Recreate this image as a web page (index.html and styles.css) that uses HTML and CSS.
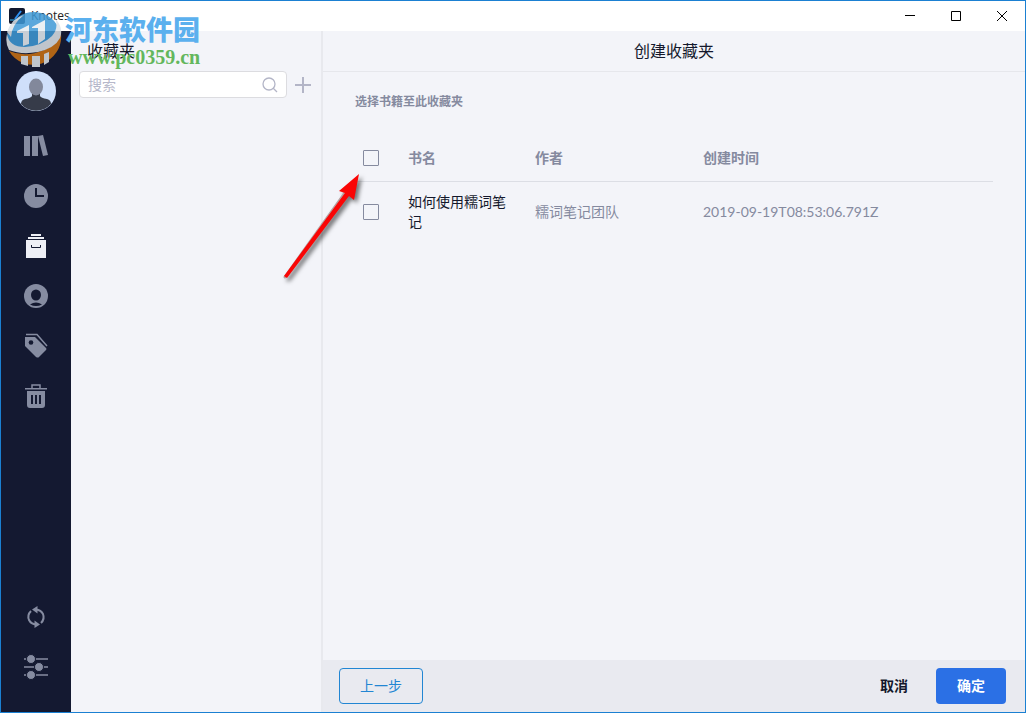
FILE: index.html
```html
<!DOCTYPE html>
<html lang="zh-CN">
<head>
<meta charset="utf-8">
<meta name="viewport" content="width=device-width, initial-scale=1">
<title>Knotes</title>
<link rel="stylesheet" href="styles.css">
</head>
<body>
<div class="window">
  <header class="titlebar">
    <svg class="app-icon" viewBox="0 0 16 16" aria-hidden="true"><rect width="16" height="16" rx="2" fill="#10182f"/><path d="M6 11 12 3" stroke="#2c8ff0" stroke-width="2"/><path d="M1 12h7l4-3" stroke="#35b7f5" fill="none"/></svg>
    <span class="app-name">Knotes</span>
    <div class="window-controls">
      <button class="window-button" aria-label="最小化"><svg viewBox="0 0 10 10"><path d="M0 4.500h10"/></svg></button>
      <button class="window-button" aria-label="最大化"><svg viewBox="0 0 10 10"><path d="M.5.5h9v9h-9z"/></svg></button>
      <button class="window-button" aria-label="关闭"><svg viewBox="0 0 10 10"><path d="m0 0 10 10M10 0 0 10"/></svg></button>
    </div>
  </header>

  <div class="workspace">
    <nav class="sidebar" aria-label="导航">
      <button class="avatar" aria-label="账户">
        <svg viewBox="0 0 40 40"><circle cx="20" cy="20" r="20" fill="#cfdffa"/><path d="M16 20h8v5q1 2 7 3 4 1 4 5a20 20 0 0 1-30 0q0-4 4-5 6-1 7-3z" fill="#363b49"/><ellipse cx="20" cy="16" rx="7" ry="8.500" fill="#82889b"/></svg>
      </button>
      <button class="nav-item" aria-label="书库"><svg viewBox="0 0 24 24"><path d="M0 2h6v20H0zM8 2h6v20H8zM14 2l5-1 5 20-5 1z"/></svg></button>
      <button class="nav-item" aria-label="最近"><svg viewBox="0 0 24 24"><circle cx="12" cy="12" r="12"/><path class="cut-line" d="M12 4v8h8"/></svg></button>
      <button class="nav-item nav-item-active" aria-label="收藏夹"><svg viewBox="0 0 24 24"><path d="M7 0h10v2H7zM4 3h16v2H4zM2 6h20v18H2z"/><path class="cut-line cut-thin" d="M7.500 11v2.500h9V11"/></svg></button>
      <button class="nav-item" aria-label="个人"><svg viewBox="0 0 24 24"><circle cx="12" cy="12" r="12"/><ellipse class="cut" cx="12" cy="11" rx="5" ry="5.500"/><path class="cut" d="M6 20.500q6-4 12 0-6 3-12 0"/></svg></button>
      <button class="nav-item" aria-label="标签"><svg viewBox="0 0 24 24"><path d="M1 3h10l11 11q1 1 0 2l-7 7q-1 1-3 0L1 12z"/><path d="M2 .5h11l10 11.500" fill="none" stroke="currentColor" stroke-width="1.500"/><circle class="cut" cx="7" cy="8.500" r="2.300"/></svg></button>
      <button class="nav-item" aria-label="回收站"><svg viewBox="0 0 24 24"><path d="M1 4h22v1.500H1zM3 7h18v14q0 3-3 3H6q-3 0-3-3z"/><path d="M8 4V1h8v3" fill="none" stroke="currentColor" stroke-width="1.500"/><path class="cut-line" d="M8 11v9M12 11v9M16 11v9"/></svg></button>
      <button class="nav-item nav-item-bottom" aria-label="同步"><svg viewBox="0 0 24 24"><g fill="none" stroke="currentColor" stroke-width="2"><path d="M7 6Q3 10 5 15 7 19 12 19.500M17 18Q21 14 19 9 17 5 12 4.500"/></g><path d="M13.500 1v7.500L8 4.500zM10.500 15.500V23l5.500-3.500z"/></svg></button>
      <button class="nav-item" aria-label="设置"><svg viewBox="0 0 24 24"><path d="M0 4h24M0 12h24M0 20h24" stroke="currentColor" stroke-width="1.500"/><g class="knobs"><circle cx="7" cy="4" r="4.500"/><circle cx="15" cy="12" r="4.500"/><circle cx="7" cy="20" r="4.500"/></g></svg></button>
    </nav>

    <aside class="folders">
      <h2 class="folders-title">收藏夹</h2>
      <div class="search-row">
        <label class="search">
          <input class="search-input" type="text" placeholder="搜索" aria-label="搜索">
          <svg class="search-icon" viewBox="0 0 16 16" aria-hidden="true"><circle cx="7" cy="7" r="6"/><path d="m11 11 4 4"/></svg>
        </label>
        <button class="add-button" aria-label="新建收藏夹"><svg viewBox="0 0 16 16"><path d="M8 0v16M0 8h16"/></svg></button>
      </div>
    </aside>

    <main class="content">
      <h1 class="content-title">创建收藏夹</h1>
      <section class="picker">
        <h3 class="picker-title">选择书籍至此收藏夹</h3>
        <table class="books">
          <thead>
            <tr>
              <th class="col-check"><input class="check" type="checkbox" aria-label="全选"></th>
              <th class="col-name">书名</th>
              <th class="col-author">作者</th>
              <th>创建时间</th>
            </tr>
          </thead>
          <tbody>
            <tr>
              <td><input class="check" type="checkbox" aria-label="如何使用糯词笔记"></td>
              <td class="book-name">如何使用糯词笔记</td>
              <td>糯词笔记团队</td>
              <td>2019-09-19T08:53:06.791Z</td>
            </tr>
          </tbody>
        </table>
      </section>
      <footer class="actions">
        <button class="button button-outline">上一步</button>
        <button class="button button-text">取消</button>
        <button class="button button-primary">确定</button>
      </footer>
    </main>
  </div>

  <div class="watermark">
    <svg class="watermark-logo" viewBox="0 0 60 60" aria-hidden="true">
      <path d="M3 27A27 27 0 0 1 55 19Q52 34 36 39 18 44 6 37 3 33 3 27" fill="#3f9ad6"/>
      <path d="M5 41Q22 48 40 40 54 34 57 24A28 28 0 0 1 5 41" fill="#cc7212"/>
      <path d="M3 24Q5 37 21 37 38 36 48 26 55 18 51 8 60 18 56 28 51 38 34 42 17 45 5 40 1 33 3 24" fill="#dde3e8"/>
      <path d="M3 22Q8 8 20 5 8 14 7 27z" fill="#dde3e8"/>
      <path d="m13 21 12-6v19l-6 2V23h-6zM28 17l13-7v19l-7 5V18h-6z" fill="#e8eef2"/>
      <path d="M17 46h7v10l-7-2zM28 46h8v11h-8zM40 44l5-2v10l-5 3z" fill="#dde3e8"/>
    </svg>
    <div class="watermark-text">
      <span class="watermark-name">河东软件园</span>
      <span class="watermark-url">www.pc0359.cn</span>
    </div>
  </div>

  <svg class="pointer" viewBox="0 0 90 120" aria-hidden="true"><path d="m6 106 62-87" stroke="#b5a0a0" stroke-width="3" stroke-linecap="round"/><path d="M80 3 60 20l6 2-61 83 3 2 62-82 5 4z" fill="#fa0505"/></svg>
</div>
</body>
</html>
```
FILE: styles.css
```css
* {
  box-sizing: border-box;
}

body {
  margin: 0;
  font-family: Lato, "Noto Sans CJK SC", sans-serif;
  font-size: 14px;
  line-height: 20px;
  color: #14182c;
}

h1, h2, h3 {
  margin: 0;
  font-weight: 400;
}

button {
  padding: 0;
  border: 0;
  background: none;
  font: inherit;
  color: inherit;
}

svg {
  display: block;
}

.window {
  position: relative;
  display: flex;
  flex-direction: column;
  min-height: 100vh;
  border: 1px solid #1b80d2;
  background: #f3f4f9;
}

.titlebar {
  display: flex;
  align-items: center;
  height: 30px;
  padding-left: 8px;
  background: #fff;
}

.app-icon {
  width: 16px;
  height: 16px;
}

.app-name {
  margin-left: 6px;
  font-family: "Open Sans", sans-serif;
  font-size: 12px;
  color: #222;
}

.window-controls {
  display: flex;
  height: 100%;
  margin-left: auto;
}

.window-button {
  display: grid;
  place-items: center;
  width: 46px;
}

.window-button svg {
  width: 10px;
  height: 10px;
  overflow: visible;
  fill: none;
  stroke: #000;
}

.workspace {
  display: flex;
  flex: 1;
}

.sidebar {
  display: flex;
  flex-direction: column;
  align-items: center;
  width: 70px;
  padding: 40px 0 20px;
  background: #141931;
}

.avatar {
  width: 40px;
  height: 40px;
  margin-bottom: 10px;
}

.nav-item {
  display: grid;
  place-items: center;
  width: 70px;
  height: 50px;
  color: #868ca1;
}

.nav-item svg {
  width: 24px;
  height: 24px;
  overflow: visible;
  fill: currentColor;
}

.nav-item-active {
  color: #eeeff5;
}

.nav-item-bottom {
  margin-top: auto;
}

.nav-item .cut {
  fill: #141931;
}

.nav-item .cut-line {
  fill: none;
  stroke: #141931;
  stroke-width: 2;
}

.nav-item .cut-thin {
  stroke-width: 1;
}

.knobs {
  stroke: #141931;
}

.folders {
  width: 252px;
  padding: 8px 10px 8px 8px;
  border-right: 2px solid #e8e9ee;
}

.folders-title {
  padding-left: 8px;
  font-size: 16px;
  line-height: 24px;
}

.search-row {
  display: flex;
  align-items: center;
  gap: 8px;
  margin-top: 8px;
}

.search {
  display: flex;
  flex: 1;
  align-items: center;
  min-width: 0;
  height: 27px;
  padding: 0 8px;
  border: 1px solid #dcdce0;
  border-radius: 4px;
  background: #fff;
}

.search-input {
  flex: 1;
  min-width: 0;
  padding: 0;
  border: 0;
  outline: 0;
  background: none;
  font: inherit;
}

.search-input::placeholder {
  color: #b6b8ca;
}

.search-icon,
.add-button svg {
  width: 16px;
  height: 16px;
  fill: none;
  stroke: #b3b5c7;
}

.search-icon {
  stroke-width: 1.3;
}

.add-button {
  flex: none;
  width: 16px;
}

.add-button svg {
  stroke-width: 2;
}

.content {
  display: flex;
  flex: 1;
  flex-direction: column;
  min-width: 0;
}

.content-title {
  padding: 8px 0;
  border-bottom: 1px solid #e6e7ec;
  font-size: 16px;
  line-height: 24px;
  text-align: center;
}

.picker {
  flex: 1;
  padding: 20px 32px;
}

.picker-title {
  font-size: 12px;
  font-weight: 700;
  color: #858a9f;
}

.books {
  width: 100%;
  margin-top: 24px;
  border-collapse: collapse;
  table-layout: fixed;
  color: #858a9f;
}

.books th,
.books td {
  padding: 0 8px;
  text-align: left;
}

.books th {
  height: 45px;
  border-bottom: 1px solid #dcdee5;
}

.books td {
  height: 62px;
}

.col-check {
  width: 45px;
}

.col-name {
  width: 127px;
}

.col-author {
  width: 168px;
}

.books .book-name {
  color: #14182c;
}

.check {
  display: block;
  width: 16px;
  height: 16px;
  margin: 0;
  border: 1px solid #858a9f;
  border-radius: 1px;
  appearance: none;
}

.actions {
  display: flex;
  align-items: center;
  padding: 8px 19px 8px 16px;
  background: #e9eaf0;
}

.button {
  height: 36px;
  border-radius: 4px;
}

.button-outline {
  width: 84px;
  border: 1px solid #2286d3;
  color: #2286d3;
}

.button-text {
  width: 84px;
  margin-left: auto;
  font-weight: 700;
}

.button-primary {
  width: 70px;
  background: #2b70e5;
  font-weight: 700;
  color: #fff;
}

.watermark {
  position: absolute;
  top: 9px;
  left: 3px;
  display: flex;
  gap: 1px;
  pointer-events: none;
}

.watermark-logo {
  width: 60px;
  height: 60px;
  opacity: 0.85;
}

.watermark-text {
  display: flex;
  flex-direction: column;
  padding-top: 4px;
}

.watermark-name {
  font-family: "Noto Sans CJK SC", sans-serif;
  font-size: 27px;
  font-weight: 900;
  line-height: 30px;
  color: #5bb0ee;
}

.watermark-url {
  padding-left: 3px;
  font-family: "Liberation Serif", serif;
  font-size: 20px;
  font-weight: 700;
  line-height: 26px;
  color: #63b75d;
}

.pointer {
  position: absolute;
  top: 170px;
  left: 278px;
  width: 90px;
  height: 120px;
  filter: drop-shadow(3px 3px 2px #0008);
  pointer-events: none;
}
```
